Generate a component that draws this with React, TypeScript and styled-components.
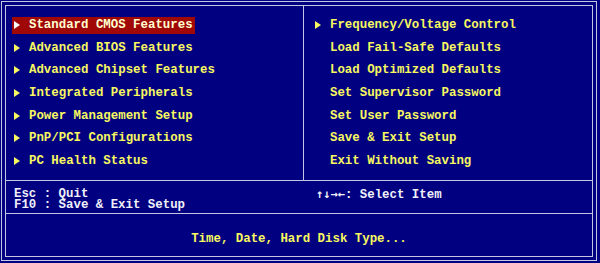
import styled, { createGlobalStyle } from 'styled-components';

const GlobalStyle = createGlobalStyle`
    html, body {
        margin: 0;
        padding: 0;
        background-color: #000080;
    }
    * {
        box-sizing: border-box;
    }
`;

const LINE = '#c4c4e4';

const Screen = styled.div`
    width: 600px;
    height: 263px;
    padding: 1px;
    background-color: #000080;
    font-family: 'Liberation Mono', 'DejaVu Sans Mono', monospace;
    font-weight: bold;
    font-size: 12.4px;
`;

const OuterFrame = styled.div`
    width: 596px;
    height: 260px;
    border: 1px solid ${LINE};
    padding: 3px;
`;

const InnerFrame = styled.div`
    height: 100%;
    border: 1px solid ${LINE};
    display: flex;
    flex-direction: column;
`;

const MenuSection = styled.div`
    height: 175px;
    border-bottom: 1px solid ${LINE};
    display: grid;
    grid-template-columns: 298px 1fr;
`;

const MenuColumn = styled.ul<{ $right?: boolean }>`
    list-style: none;
    margin: 0;
    padding: 7.7px 0 0 ${(p) => (p.$right ? '9px' : '6px')};
    border-right: ${(p) => (p.$right ? 'none' : `1px solid ${LINE}`)};
`;

const MenuRow = styled.li`
    height: 22.67px;
    display: flex;
    align-items: center;
`;

const MenuItem = styled.span<{ $selected?: boolean }>`
    display: inline-flex;
    align-items: center;
    height: 17px;
    padding: 0 2px;
    gap: 9px;
    white-space: pre;
    color: ${(p) => (p.$selected ? '#ffffd0' : '#f8f860')};
    background-color: ${(p) => (p.$selected ? '#a00808' : 'transparent')};
`;

const ArrowSlot = styled.span`
    width: 6px;
    height: 8px;
    display: inline-flex;
`;

const KeysBar = styled.div`
    height: 33px;
    border-bottom: 1px solid ${LINE};
    display: grid;
    grid-template-columns: 302px 1fr;
    padding: 5px 0 0 8px;
    color: #f0f0f8;
    line-height: 10.5px;
    align-content: center;
`;

const KeyText = styled.div`
    white-space: pre;
`;

const NavArrows = styled.span`
    font-family: 'DejaVu Sans Mono', monospace;
    font-size: 12px;
    letter-spacing: 0;
`;

const HelpBar = styled.div`
    flex: 1;
    display: flex;
    align-items: center;
    justify-content: center;
    padding-top: 8px;
    color: #f8f860;
    white-space: pre;
`;

const Arrow = ({ color }: { color: string }) => (
    <svg width="6" height="8" viewBox="0 0 6 8">
        <polygon points="0,0 6,4 0,8" fill={color} />
    </svg>
);

const leftItems = [
    'Standard CMOS Features',
    'Advanced BIOS Features',
    'Advanced Chipset Features',
    'Integrated Peripherals',
    'Power Management Setup',
    'PnP/PCI Configurations',
    'PC Health Status',
];

const rightItems = [
    { label: 'Frequency/Voltage Control', arrow: true },
    { label: 'Load Fail-Safe Defaults', arrow: false },
    { label: 'Load Optimized Defaults', arrow: false },
    { label: 'Set Supervisor Password', arrow: false },
    { label: 'Set User Password', arrow: false },
    { label: 'Save & Exit Setup', arrow: false },
    { label: 'Exit Without Saving', arrow: false },
];

const App = () => {
    return (
        <>
            <GlobalStyle />
            <Screen>
                <OuterFrame>
                    <InnerFrame>
                        <MenuSection>
                            <MenuColumn>
                                {leftItems.map((item, index) => (
                                    <MenuRow key={index}>
                                        <MenuItem $selected={index === 0}>
                                            <ArrowSlot>
                                                <Arrow color={index === 0 ? '#ffffff' : '#f8f860'} />
                                            </ArrowSlot>
                                            {item}
                                        </MenuItem>
                                    </MenuRow>
                                ))}
                            </MenuColumn>
                            <MenuColumn $right>
                                {rightItems.map((item, index) => (
                                    <MenuRow key={index}>
                                        <MenuItem>
                                            <ArrowSlot>
                                                {item.arrow && <Arrow color="#f8f860" />}
                                            </ArrowSlot>
                                            {item.label}
                                        </MenuItem>
                                    </MenuRow>
                                ))}
                            </MenuColumn>
                        </MenuSection>
                        <KeysBar>
                            <KeyText>{'Esc : Quit\nF10 : Save & Exit Setup'}</KeyText>
                            <KeyText>
                                <NavArrows>↑↓→←</NavArrows>: Select Item
                            </KeyText>
                        </KeysBar>
                        <HelpBar>Time, Date, Hard Disk Type...</HelpBar>
                    </InnerFrame>
                </OuterFrame>
            </Screen>
        </>
    );
};

export default App;
